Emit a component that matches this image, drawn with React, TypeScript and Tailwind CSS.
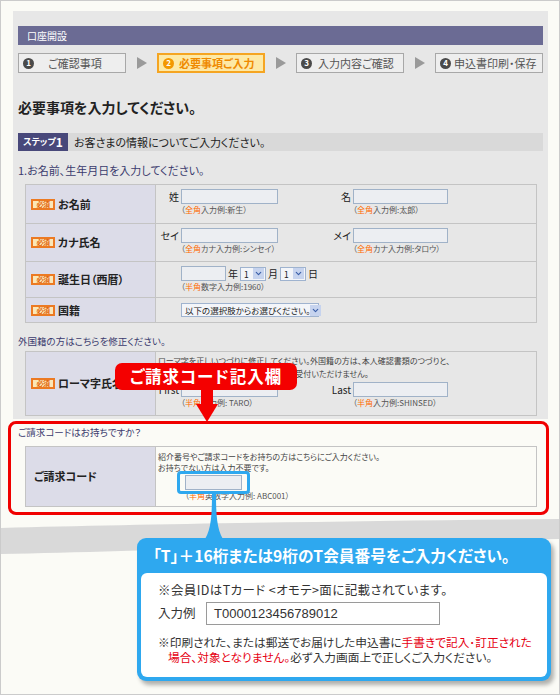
import { ChevronDown } from "lucide-react";

function Badge() {
  return (
    <span className="inline-flex items-center justify-center w-[24px] h-[11px] border-2 border-[#ec7a22] bg-[#fbe7b8] text-[7px] leading-[7px] font-bold text-[#e2660c] mr-[3px] shrink-0 tracking-[-0.5px]">
      必須
    </span>
  );
}

function Input({ w }: { w: string }) {
  return <span className={"block h-[15px] border border-[#a0b2c8] bg-[#eceef2] " + w} />;
}

function Hint({ kind, rest }: { kind: string; rest: string }) {
  return (
    <div className="text-[8px] leading-[12px] text-[#555] whitespace-nowrap">
      （<span className="text-[#ff6a00]">{kind}</span>
      {rest}）
    </div>
  );
}

function Select({ w, text }: { w: string; text: string }) {
  return (
    <div className={"flex items-center h-[14px] border border-[#9fb3cf] bg-[#f3f5f9] " + w}>
      <span className="flex-1 pl-[3px] text-[8.5px] leading-[12px] text-[#222] whitespace-nowrap">{text}</span>
      <span className="w-[11px] h-[11px] mr-[1px] bg-[#c6d3ee] flex items-center justify-center shrink-0">
        <ChevronDown size={9} strokeWidth={3} color="#3a5ea8" />
      </span>
    </div>
  );
}

function Step({ n, label, active, gap }: { n: string; label: string; active?: boolean; gap: string }) {
  return (
    <div
      className={
        active
          ? "w-[108px] h-[20px] border-2 border-[#f5a522] bg-[#fde9a6] flex items-center pl-[4px]"
          : "w-[108px] h-[20px] border border-[#a8a8a8] bg-[#eeeeee] flex items-center pl-[4px]"
      }
    >
      <span
        className={
          active
            ? "w-[11px] h-[11px] rounded-full bg-[#f39800] text-white text-[8px] font-bold leading-none flex items-center justify-center"
            : "w-[11px] h-[11px] rounded-full bg-[#4a4a4a] text-white text-[8px] font-bold leading-none flex items-center justify-center"
        }
      >
        {n}
      </span>
      <span
        className={
          active
            ? gap + " text-[11px] font-bold text-[#ef8a00] whitespace-nowrap"
            : gap + " text-[11px] text-[#555] whitespace-nowrap"
        }
      >
        {label}
      </span>
    </div>
  );
}

function Arrow() {
  return (
    <svg width="10" height="12" viewBox="0 0 10 12">
      <polygon points="0,0 10,6 0,12" fill="#9a9a9a" />
    </svg>
  );
}

function LabelCell({ children, badge = true }: { children: React.ReactNode; badge?: boolean }) {
  return (
    <div className="bg-[#dcdce8] flex items-center pl-[5px] text-[11px] font-bold text-[#222] border-r border-[#c4c4c4] whitespace-nowrap">
      {badge && <Badge />}
      {children}
    </div>
  );
}

function NameInputs({ a, b, ha, hb, kind }: { a: string; b: string; ha: string; hb: string; kind: string }) {
  return (
    <div className="grid grid-cols-[25px_97px_75px_95px] items-center">
      <span className="text-right pr-[2px] text-[10px] leading-[15px] text-[#222] whitespace-nowrap">{a}</span>
      <Input w="w-[97px]" />
      <span className="text-right pr-[2px] text-[10px] leading-[15px] text-[#222]">{b}</span>
      <Input w="w-[95px]" />
      <span />
      <Hint kind={kind} rest={ha} />
      <span />
      <Hint kind={kind} rest={hb} />
    </div>
  );
}

export default function App() {
  return (
    <div className="relative w-[560px] h-[695px] bg-[#fbfbf6] border border-[#cbcbcb] overflow-hidden font-['Noto_Sans_CJK_JP','Noto_Sans',sans-serif] [font-feature-settings:'palt'] text-[#222]">
      {/* gray panel */}
      <div className="ml-[12px] mt-[10px] w-[535px] bg-[#e7e7e7] px-[5px] pt-[15px] pb-[3px]">
        <div className="h-[19px] bg-[#6b6b94] text-white text-[10px] leading-[19px] pl-[9px]">口座開設</div>

        <div className="mt-[8px] flex items-center justify-between">
          <Step n="1" label="ご確認事項" gap="ml-[14px]" />
          <Arrow />
          <Step n="2" label="必要事項ご入力" active gap="ml-[5px]" />
          <Arrow />
          <Step n="3" label="入力内容ご確認" gap="ml-[6px]" />
          <Arrow />
          <Step n="4" label="申込書印刷・保存" gap="ml-[3px]" />
        </div>

        <h1 className="mt-[27px] text-[14px] leading-[15px] font-bold text-[#222]">必要事項を入力してください。</h1>

        <div className="mt-[18px] h-[18px] flex bg-[#d9d9d9]">
          <div className="w-[50px] bg-[#48487a] text-white font-bold flex items-center justify-center">
            <span className="text-[9px]">ステップ</span>
            <span className="text-[12px] leading-none">1</span>
          </div>
          <div className="pl-[6px] text-[11px] leading-[18px] text-[#222]">お客さまの情報についてご入力ください。</div>
        </div>

        <p className="mt-[12px] text-[11px] leading-[14px] text-[#3b3b6e]">1.お名前、生年月日を入力してください。</p>

        <div className="mt-[7px] ml-[7px] w-[512px] border border-[#c4c4c4]">
          <div className="grid grid-cols-[130px_1fr] h-[39px] border-b border-[#c4c4c4]">
            <LabelCell>お名前</LabelCell>
            <div className="pt-[4px]">
              <NameInputs a="姓" b="名" kind="全角" ha="入力例:新生" hb="入力例:太郎" />
            </div>
          </div>
          <div className="grid grid-cols-[130px_1fr] h-[38px] border-b border-[#c4c4c4]">
            <LabelCell>カナ氏名</LabelCell>
            <div className="pt-[4px]">
              <NameInputs a="セイ" b="メイ" kind="全角" ha="カナ入力例:シンセイ" hb="カナ入力例:タロウ" />
            </div>
          </div>
          <div className="grid grid-cols-[130px_1fr] h-[36px] border-b border-[#c4c4c4]">
            <LabelCell>誕生日（西暦）</LabelCell>
            <div className="pt-[4px] pl-[25px]">
              <div className="flex items-center text-[10px] leading-[15px] text-[#222]">
                <Input w="w-[45px]" />
                <span className="mx-[2px]">年</span>
                <Select w="w-[26px]" text="1" />
                <span className="mx-[2px]">月</span>
                <Select w="w-[26px]" text="1" />
                <span className="ml-[2px]">日</span>
              </div>
              <Hint kind="半角" rest="数字入力例:1960" />
            </div>
          </div>
          <div className="grid grid-cols-[130px_1fr] h-[24px]">
            <LabelCell>国籍</LabelCell>
            <div className="pt-[5px] pl-[25px]">
              <Select w="w-[138px]" text="以下の選択肢からお選びください。" />
            </div>
          </div>
        </div>

        <p className="mt-[11px] text-[9.5px] leading-[14px] text-[#3b3b6e]">外国籍の方はこちらを修正ください。</p>

        <div className="mt-[3px] ml-[7px] w-[512px] border border-[#c4c4c4]">
          <div className="grid grid-cols-[130px_1fr] h-[63px]">
            <LabelCell>ローマ字氏名</LabelCell>
            <div className="pt-[2px]">
              <div className="pl-[2px] text-[8px] leading-[13px] text-[#444] whitespace-nowrap">
                ローマ字を正しいつづりに修正してください。外国籍の方は、本人確認書類のつづりと、
                <br />
                同じつづりでご入力ください。異なるとお受付いただけません。
              </div>
              <div className="mt-[2px]">
                <NameInputs a="First" b="Last" kind="半角" ha="入力例: TARO" hb="入力例:SHINSED" />
              </div>
            </div>
          </div>
        </div>
      </div>

      {/* red frame */}
      <div className="relative mt-[2px] ml-[7px] w-[541px] h-[94px] border-[3px] border-[#f00000] rounded-[8px] pt-[1px]">
        <p className="pl-[7px] text-[9.5px] leading-[14px] text-[#3b3b6e]">ご請求コードはお持ちですか？</p>
        <div className="mt-[7px] ml-[14px] w-[512px] border border-[#c4c4c4]">
          <div className="grid grid-cols-[130px_1fr] h-[59px]">
            <LabelCell badge={false}>
              <span className="pl-[3px]">ご請求コード</span>
            </LabelCell>
            <div className="pt-[4px] bg-[#fbfbf6]">
              <div className="pl-[2px] text-[8px] leading-[11px] text-[#444] whitespace-nowrap">
                紹介番号やご請求コードをお持ちの方はこちらにご入力ください。
                <br />
                お持ちでない方は入力不要です。
              </div>
              <div className="relative mt-[2px] ml-[29px] w-[57px]">
                <Input w="w-[57px]" />
                <span className="absolute -left-[8px] -right-[8px] -top-[4px] -bottom-[4px] border-[3px] border-[#2ea8ef] rounded-[4px]" />
              </div>
              <div className="ml-[29px]">
                <Hint kind="半角" rest="英数字入力例: ABC001" />
              </div>
            </div>
          </div>
        </div>
      </div>

      {/* gray swoosh behind callout */}
      <svg className="absolute left-0 top-[510px]" width="558" height="50" viewBox="0 0 558 50">
        <path d="M0,17 C150,13 350,10 558,8 L558,28 C350,32 150,40 0,43 Z" fill="#d9d9d9" />
      </svg>

      {/* callout */}
      <div className="relative mt-[23px] ml-[136px] w-[414px] h-[143px] bg-[#2ea8ef] rounded-[9px] p-[4px] pt-0 flex flex-col shadow-[3px_4px_4px_rgba(0,0,0,0.3)]">
        <div className="h-[35px] pl-[12px] flex items-center text-white font-bold text-[15.7px] whitespace-nowrap">
          「T」＋16桁または9桁のT会員番号をご入力ください。
        </div>
        <div className="flex-1 bg-white rounded-[6px] pl-[17px] pt-[9px] text-[#333]">
          <p className="text-[12.5px] leading-[16px] tracking-[0.4px]">※会員IDはTカード &lt;オモテ&gt;面に記載されています。</p>
          <div className="mt-[4px] flex items-center">
            <span className="w-[48px] text-[12.5px]">入力例</span>
            <div className="w-[234px] h-[23px] border border-[#9a9a9a] pl-[7px] text-[13px] leading-[21px] font-['Liberation_Sans',sans-serif]">
              T0000123456789012
            </div>
          </div>
          <p className="mt-[9px] text-[11.7px] leading-[15px] pl-[10px] -indent-[10px]">
            ※印刷された、または郵送でお届けした申込書に<span className="text-[#e60012]">手書きで記入･訂正された</span>
            <br />
            <span className="text-[#e60012]">場合、対象となりません。</span>必ず入力画面上で正しくご入力ください。
          </p>
        </div>
      </div>

      {/* callout tail */}
      <svg className="absolute left-[196px] top-[493px]" width="34" height="52" viewBox="0 0 34 52">
        <path d="M15,0 L19,0 C19,28 21,42 31,51 L3,51 C13,42 15,28 15,0 Z" fill="#2ea8ef" />
      </svg>

      {/* red label + arrow */}
      <div className="absolute left-[114px] top-[362px] w-[182px] h-[27px] bg-[#f40000] rounded-[7px] flex items-center justify-center text-white font-bold text-[16.5px] tracking-[1px]">
        ご請求コード記入欄
      </div>
      <svg className="absolute left-[194px] top-[388px]" width="24" height="34" viewBox="0 0 24 34">
        <rect x="6" y="0" width="12" height="17" fill="#f40000" />
        <polygon points="1,15 23,15 12,33" fill="#f40000" />
      </svg>
    </div>
  );
}
